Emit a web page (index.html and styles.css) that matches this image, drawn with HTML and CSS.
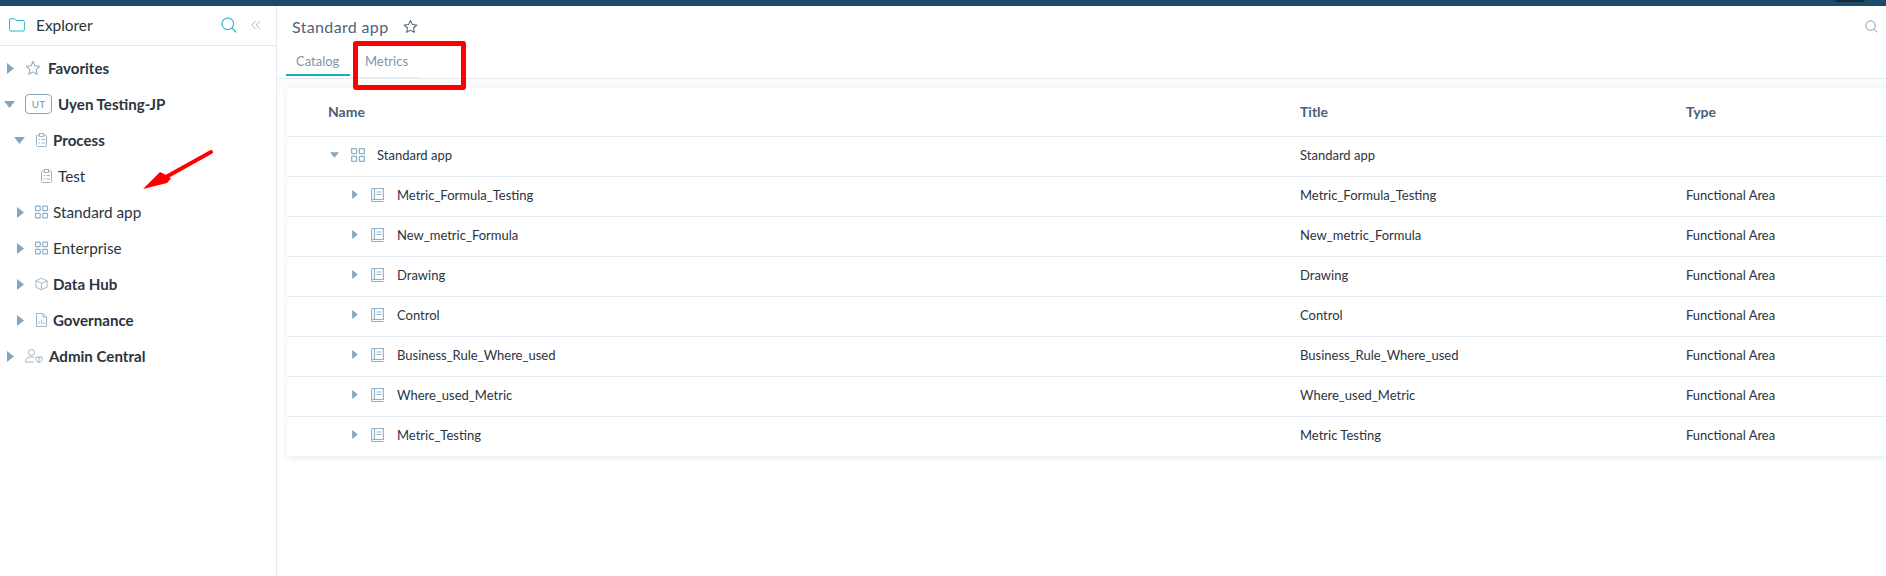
FILE: index.html
```html
<!DOCTYPE html>
<html lang="en">
<head>
<meta charset="utf-8">
<title>Standard app</title>
<link rel="stylesheet" href="styles.css">
</head>
<body>
<svg width="0" height="0" class="defs">
  <defs>
    <symbol id="caret-r" viewBox="0 0 7 11"><path d="M0 0l7 5.500L0 11z" fill="#86a5bc"/></symbol>
    <symbol id="caret-d" viewBox="0 0 11 7"><path d="M0 0h11L5.500 7z" fill="#86a5bc"/></symbol>
    <symbol id="star" viewBox="0 0 16 16"><path d="M8 1.500l2 4.300 4.700.6-3.500 3.200.9 4.700L8 11.900l-4.100 2.400.9-4.700L1.300 6.400 6 5.800z" fill="none" stroke="currentColor" stroke-width="1.100" stroke-linejoin="round"/></symbol>
    <symbol id="clip" viewBox="0 0 12 14"><g fill="none" stroke="#9db3c6" stroke-width="1"><rect x="1" y="2" width="10" height="11.500" rx="1"/><rect x="4" y=".5" width="4" height="3" fill="#fff"/><path d="M3 6.500h1.500M6 6.500h3.500M3 10h1.500M6 10h3.500"/></g></symbol>
    <symbol id="grid" viewBox="0 0 13 13"><g fill="none" stroke="#8fb0c9" stroke-width="1.200"><rect x=".6" y=".6" width="4.600" height="4.600" rx=".5"/><rect x="7.800" y=".6" width="4.600" height="4.600" rx=".5"/><rect x=".6" y="7.800" width="4.600" height="4.600" rx=".5"/><rect x="7.800" y="7.800" width="4.600" height="4.600" rx=".5"/></g></symbol>
    <symbol id="cube" viewBox="0 0 14 14"><path d="M7 .8l6 2.700v7L7 13.200 1 10.500v-7zM1 3.500l6 2.700 6-2.700M7 6.200v7" fill="none" stroke="#9db3c6" stroke-width="1" stroke-linejoin="round"/></symbol>
    <symbol id="doc" viewBox="0 0 11 14"><path d="M.5.500h6.500l3.500 3.500v9.500H.5zM7 .5V4h3.500M3 11V8.500M5.500 11V6.500M8 11V9" fill="none" stroke="#9db3c6" stroke-width="1"/></symbol>
    <symbol id="admin" viewBox="0 0 18 14"><g fill="none" stroke="#9db3c6" stroke-width="1"><circle cx="6.500" cy="3.500" r="3"/><path d="M.5 13c0-3.500 2.500-5 6-5 1 0 2 .2 2.800.5M.5 13h8"/><path d="M11 8h6v2.500c0 1.500-1.300 2.700-3 3-1.700-.3-3-1.500-3-3zM14 8v5.500"/></g></symbol>
    <symbol id="book" viewBox="0 0 13 14"><g fill="none" stroke="#8fb0c9" stroke-width="1.100"><path d="M.6 12V1.500a1 1 0 0 1 1-1h10.800v11H1.600a1 1 0 0 0 0 2h10.800"/><path d="M3.500 .5v11"/><path d="M5.500 4h5M5.500 6.500h5"/></g></symbol>
    <symbol id="search" viewBox="0 0 16 16"><circle cx="6.800" cy="6.800" r="5.800" fill="none" stroke="currentColor" stroke-width="1.100"/><path d="M11 11l4.300 4.300" stroke="currentColor" stroke-width="1.100"/></symbol>
  </defs>
</svg>

<div class="topbar"><span class="avatar"></span></div>

<div class="app">
  <aside class="sidebar">
    <header class="side-head">
      <svg class="folder" viewBox="0 0 16 14"><path d="M.6 2a1.200 1.200 0 0 1 1.200-1.200h3.700L7 2.500h7.200a1.200 1.200 0 0 1 1.200 1.200v8.100a1.200 1.200 0 0 1-1.200 1.200H1.800a1.200 1.200 0 0 1-1.200-1.200z" fill="none" stroke="#2cb3c4" stroke-width="1"/></svg>
      <span class="side-title">Explorer</span>
      <svg class="side-search"><use href="#search"/></svg>
      <svg class="collapse" viewBox="0 0 10 10"><path d="M4.500 1L.8 5l3.700 4M9 1L5.300 5 9 9" fill="none" stroke="#a9bccb" stroke-width="1"/></svg>
    </header>
    <ul class="tree">
      <li class="node lvl0"><svg class="caret"><use href="#caret-r"/></svg><svg class="ico star-ico"><use href="#star"/></svg><span class="lbl b">Favorites</span></li>
      <li class="node lvl0"><svg class="caret-open"><use href="#caret-d"/></svg><span class="badge">UT</span><span class="lbl b">Uyen Testing-JP</span></li>
      <li class="node lvl1"><svg class="caret-open"><use href="#caret-d"/></svg><svg class="ico small"><use href="#clip"/></svg><span class="lbl b">Process</span></li>
      <li class="node lvl2"><svg class="ico small"><use href="#clip"/></svg><span class="lbl">Test</span></li>
      <li class="node lvl1"><svg class="caret"><use href="#caret-r"/></svg><svg class="ico small"><use href="#grid"/></svg><span class="lbl">Standard app</span></li>
      <li class="node lvl1"><svg class="caret"><use href="#caret-r"/></svg><svg class="ico small"><use href="#grid"/></svg><span class="lbl">Enterprise</span></li>
      <li class="node lvl1"><svg class="caret"><use href="#caret-r"/></svg><svg class="ico small"><use href="#cube"/></svg><span class="lbl b">Data Hub</span></li>
      <li class="node lvl1"><svg class="caret"><use href="#caret-r"/></svg><svg class="ico small"><use href="#doc"/></svg><span class="lbl b">Governance</span></li>
      <li class="node lvl0"><svg class="caret"><use href="#caret-r"/></svg><svg class="ico admin"><use href="#admin"/></svg><span class="lbl b">Admin Central</span></li>
    </ul>
  </aside>

  <main class="main">
    <div class="title-row">
      <h1 class="title">Standard app</h1>
      <svg class="title-star"><use href="#star"/></svg>
      <svg class="main-search"><use href="#search"/></svg>
    </div>
    <nav class="tabs">
      <a class="tab active">Catalog</a>
      <a class="tab">Metrics</a>
    </nav>
    <div class="content">
      <section class="card">
        <div class="row head"><span class="c1">Name</span><span class="c2">Title</span><span class="c3">Type</span></div>
        <div class="row"><span class="c1 root"><svg class="t-caret-d"><use href="#caret-d"/></svg><svg class="t-ico root-ico"><use href="#grid"/></svg>Standard app</span><span class="c2">Standard app</span><span class="c3"></span></div>
        <div class="row"><span class="c1 child"><svg class="t-caret"><use href="#caret-r"/></svg><svg class="t-ico"><use href="#book"/></svg>Metric_Formula_Testing</span><span class="c2">Metric_Formula_Testing</span><span class="c3">Functional Area</span></div>
        <div class="row"><span class="c1 child"><svg class="t-caret"><use href="#caret-r"/></svg><svg class="t-ico"><use href="#book"/></svg>New_metric_Formula</span><span class="c2">New_metric_Formula</span><span class="c3">Functional Area</span></div>
        <div class="row"><span class="c1 child"><svg class="t-caret"><use href="#caret-r"/></svg><svg class="t-ico"><use href="#book"/></svg>Drawing</span><span class="c2">Drawing</span><span class="c3">Functional Area</span></div>
        <div class="row"><span class="c1 child"><svg class="t-caret"><use href="#caret-r"/></svg><svg class="t-ico"><use href="#book"/></svg>Control</span><span class="c2">Control</span><span class="c3">Functional Area</span></div>
        <div class="row"><span class="c1 child"><svg class="t-caret"><use href="#caret-r"/></svg><svg class="t-ico"><use href="#book"/></svg>Business_Rule_Where_used</span><span class="c2">Business_Rule_Where_used</span><span class="c3">Functional Area</span></div>
        <div class="row"><span class="c1 child"><svg class="t-caret"><use href="#caret-r"/></svg><svg class="t-ico"><use href="#book"/></svg>Where_used_Metric</span><span class="c2">Where_used_Metric</span><span class="c3">Functional Area</span></div>
        <div class="row last"><span class="c1 child"><svg class="t-caret"><use href="#caret-r"/></svg><svg class="t-ico"><use href="#book"/></svg>Metric_Testing</span><span class="c2">Metric Testing</span><span class="c3">Functional Area</span></div>
      </section>
    </div>
  </main>
</div>

<div class="mark-box"></div>
<svg class="mark-arrow" viewBox="0 0 80 50"><path d="M71 4L26 29" stroke="#f00" stroke-width="4" stroke-linecap="round"/><path d="M3 41L20 24l7 3.500 4 3-4 4.500z" fill="#f00"/></svg>
</body>
</html>
```
FILE: styles.css
```css
* { box-sizing: border-box; }
html, body { margin: 0; padding: 0; height: 100%; overflow: hidden; background: #fff; }
body { font-family: Lato, "Open Sans", sans-serif; color: #2b3440; width: 1886px; height: 576px; position: relative; }
.defs { position: absolute; }

.topbar { height: 6px; background: #1b4a6b; position: relative; }
.avatar { position: absolute; right: 21px; top: 0; width: 30px; height: 2px; background: #1c2a35; border-radius: 0 0 12px 12px; }

.app { display: flex; height: 570px; }

.sidebar { width: 277px; flex: none; border-right: 1px solid #e4ebf1; }
.side-head { height: 40px; border-bottom: 1px solid #dfe7ee; display: flex; align-items: center; padding-left: 9px; padding-bottom: 2px; }
.folder { width: 16px; height: 14px; flex: none; margin-right: 11px; }
.side-title { font-size: 15.4px; color: #2b3440; line-height: 20px; width: 185px; }
.side-search { width: 16px; height: 16px; color: #2cb3c4; flex: none; margin-right: 14px; }
.collapse { width: 10px; height: 10px; flex: none; }

.tree { list-style: none; margin: 4px 0 0; padding: 0; }
.node { height: 36px; display: flex; align-items: center; font-size: 15.3px; }
.lvl0 { padding-left: 7px; }
.lvl1 { padding-left: 17px; }
.lvl2 { padding-left: 40px; }
.caret { width: 7px; height: 11px; flex: none; margin-right: 11px; }
.caret-open { width: 11px; height: 7px; flex: none; margin-left: -3px; margin-right: 10px; }
.lvl1 .caret-open { margin-right: 10px; }
.ico { flex: none; }
.star-ico { width: 16px; height: 16px; color: #94aec4; margin-right: 7px; }
.small { width: 13px; height: 14px; margin-right: 5px; }
.admin { width: 18px; height: 14px; margin-right: 6px; }
.badge { width: 27px; height: 20px; border: 1px solid #86a5bc; border-radius: 4px; font-size: 10px; color: #7f94a6; display: flex; align-items: center; justify-content: center; flex: none; margin-right: 6px; }
.lbl { line-height: 20px; color: #2b3440; white-space: nowrap; }
.lbl.b { font-weight: 700; font-size: 15.1px; }

.main { flex: 1; min-width: 0; display: flex; flex-direction: column; }
.title-row { height: 33px; display: flex; align-items: center; padding-left: 15px; padding-top: 8px; padding-right: 8px; }
.title { margin: 0; font-size: 16px; font-weight: 400; color: #4f6478; letter-spacing: .35px; line-height: 22px; }
.title-star { width: 15px; height: 15px; color: #4f6478; margin-left: 14px; flex: none; }
.main-search { width: 13px; height: 13px; color: #7b8f9f; margin-left: auto; flex: none; }

.tabs { height: 40px; display: flex; align-items: stretch; border-bottom: 1px solid #e4ebf1; padding-left: 9px; }
.tab { font-size: 13px; color: #7d96ad; padding: 13px 0 0 15px; line-height: 18px; border-bottom: 1px solid #e9eef3; width: 69px; }
.tab.active { width: 64px; border-bottom: 2px solid #16b0c2; margin-bottom: 2px; padding-left: 10px; }

.content { background: #fafbfb; height: 10px; padding-left: 10px; }
.card { background: #fff; margin-top: 9px; box-shadow: 0 2px 6px rgba(60, 90, 120, .12); width: 1600px; position: relative; }
.row { height: 40px; display: grid; grid-template-columns: 1003px 396px 1fr; align-items: center; border-bottom: 1px solid #e6edf4; font-size: 13px; color: #2b3440; padding-bottom: 4px; }
.row.last { border-bottom: 0; height: 39px; }
.row.head { height: 49px; font-size: 14px; font-weight: 700; color: #4a6076; padding-bottom: 1px; }
.row > span { white-space: nowrap; }
.head .c1 { padding-left: 41px; }
.c1 { display: flex; align-items: center; }
.root { padding-left: 43px; }
.child { padding-left: 65px; }
.c2 { padding-left: 10px; }
.t-caret { width: 6px; height: 9px; flex: none; margin-right: 13px; }
.t-caret-d { width: 9px; height: 6px; flex: none; margin-right: 12px; }
.t-ico { width: 13px; height: 14px; flex: none; margin-right: 13px; }
.t-ico.root-ico { width: 14px; margin-right: 12px; }

.mark-box { position: absolute; left: 353px; top: 41px; width: 113px; height: 49px; border: 5px solid #f00; border-radius: 3px; }
.mark-arrow { position: absolute; left: 140px; top: 148px; width: 80px; height: 50px; }
```
